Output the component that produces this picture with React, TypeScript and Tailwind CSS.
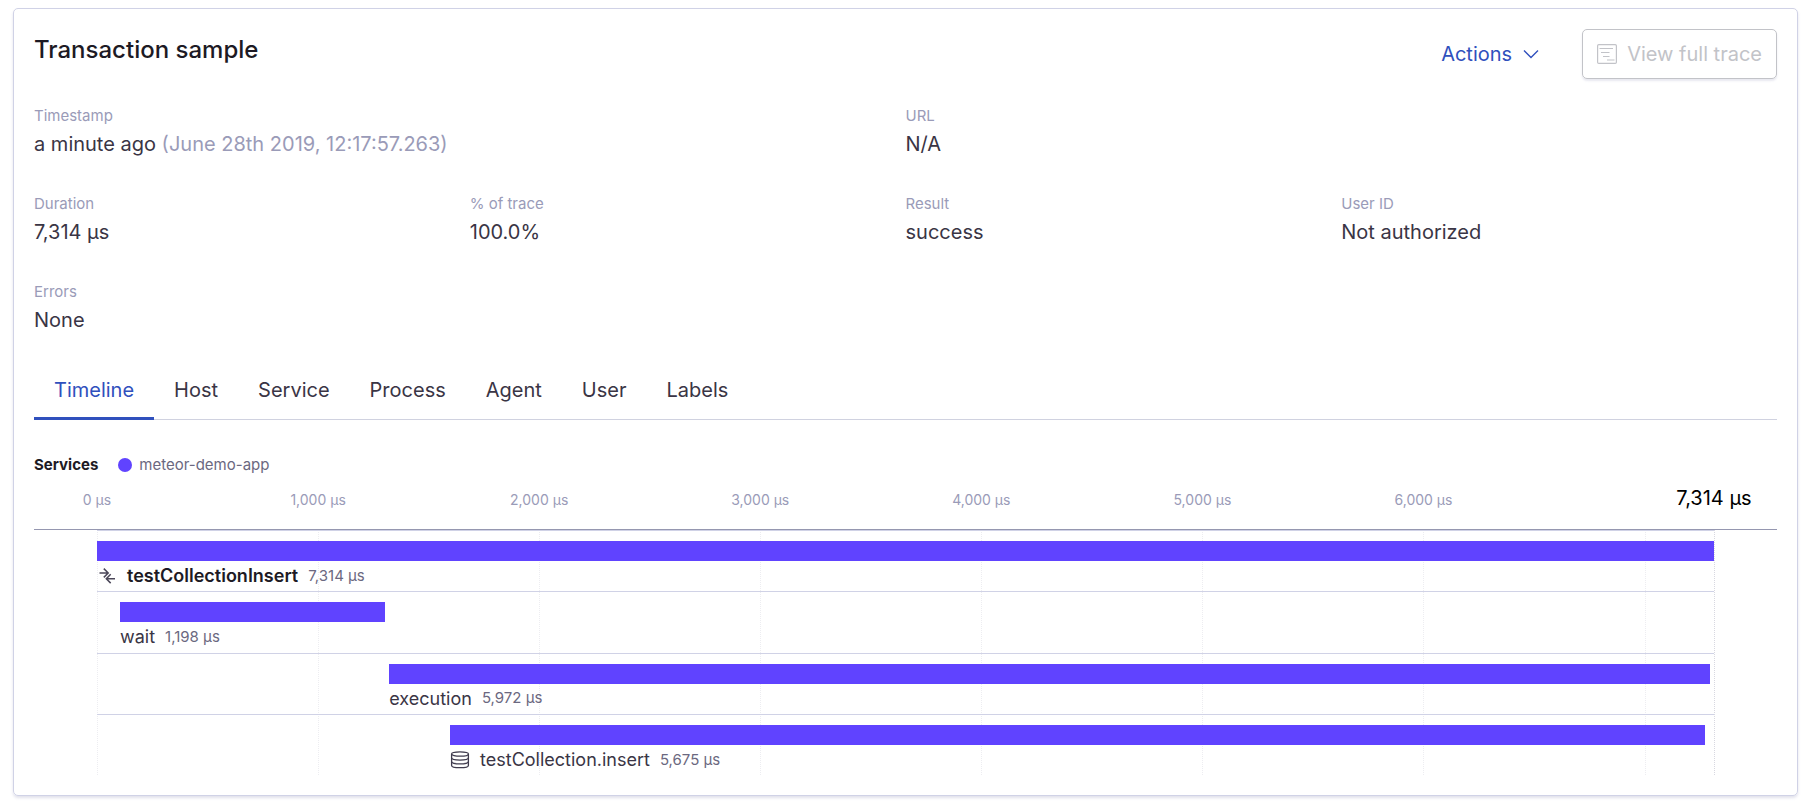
import React from "react";

const TOTAL = 7314;

const ticks = [0, 1000, 2000, 3000, 4000, 5000, 6000];
const gridLines = [0, 1000, 2000, 3000, 4000, 5000, 6000, 7000];

const format = (n: number) => n.toLocaleString("en-US") + " µs";
const percent = (n: number) => (n / TOTAL) * 100 + "%";

type Span = {
  name: string;
  start: number;
  duration: number;
  icon?: React.ReactNode;
  root?: boolean;
};

function MergeIcon() {
  return (
    <svg width="20" height="20" viewBox="0 0 20 20" fill="none" stroke="#4a4658" strokeWidth="1.5" aria-hidden="true">
      <path d="M2.500 7h8.500M6.800 2.600L11.200 7l-4.400 4.400M18 12.700H9.500M13.700 8.300l-4.400 4.400 4.400 4.400" />
    </svg>
  );
}

function DatabaseIcon() {
  return (
    <svg width="20" height="20" viewBox="0 0 20 20" fill="none" stroke="#3f3b4d" strokeWidth="1.300" aria-hidden="true">
      <ellipse cx="10" cy="4" rx="8.400" ry="2.200" />
      <path d="M1.600 4v11.400c0 1.300 3.700 2.300 8.400 2.300s8.400-1 8.400-2.300V4" />
      <path d="M1.600 7.800c0 1.300 3.700 2.300 8.400 2.300s8.400-1 8.400-2.300M1.600 11.600c0 1.300 3.700 2.300 8.400 2.300s8.400-1 8.400-2.300" />
    </svg>
  );
}

function TraceIcon() {
  return (
    <svg width="20" height="20" viewBox="0 0 20 20" fill="none" stroke="currentColor" strokeWidth="1.200" aria-hidden="true">
      <rect x="0.600" y="0.600" width="18.800" height="18.800" rx="1.200" />
      <path d="M2.500 4.500h13.500M4 8.500h8.500M6 12.500h6.500M10 16h7.500" />
    </svg>
  );
}

const spans: Span[] = [
  { name: "testCollectionInsert", start: 0, duration: 7314, icon: <MergeIcon />, root: true },
  { name: "wait", start: 104, duration: 1198 },
  { name: "execution", start: 1322, duration: 5972 },
  { name: "testCollection.insert", start: 1597, duration: 5675, icon: <DatabaseIcon /> },
];

const tabs = ["Timeline", "Host", "Service", "Process", "Agent", "User", "Labels"];

function Field({ label, wide, children }: { label: string; wide?: boolean; children: React.ReactNode }) {
  return (
    <div className={wide ? "col-span-2" : ""}>
      <dt className="text-[15px] leading-6 text-[#9a9bb8]">{label}</dt>
      <dd className="text-xl leading-8 text-[#3a3545]">{children}</dd>
    </div>
  );
}

export default function App() {
  return (
    <main className="bg-white py-2 pr-4 pl-[13px] font-[Inter,sans-serif]">
      <section className="rounded-[5px] border border-[#d0d2e6] p-5 shadow-[0_2px_3px_rgba(110,110,160,0.2)]">
        <header className="flex items-start justify-between">
          <h1 className="text-2xl leading-[42px] font-medium text-[#1d1a24]">Transaction sample</h1>
          <div className="flex items-center gap-[42px]">
            <button className="flex items-center gap-2.5 text-xl text-[#3050bd]">
              Actions
              <svg width="18" height="18" viewBox="0 0 18 18" fill="none" stroke="currentColor" strokeWidth="1.400" aria-hidden="true">
                <path d="M2 5.500l7 7 7-7" />
              </svg>
            </button>
            <button
              disabled
              className="flex h-[50px] items-center gap-2.5 rounded-[5px] border border-[#c2c3c8] px-3.5 text-xl text-[#c2c3c8] shadow-[0_2px_2px_rgba(110,110,160,0.15)]"
            >
              <TraceIcon />
              View full trace
            </button>
          </div>
        </header>

        <dl className="mt-[25px] grid grid-cols-4 gap-y-8">
          <Field label="Timestamp" wide>
            a minute ago <span className="text-[#9a9bb8]">(June 28th 2019, 12:17:57.263)</span>
          </Field>
          <Field label="URL" wide>N/A</Field>
          <Field label="Duration">7,314 µs</Field>
          <Field label="% of trace">100.0%</Field>
          <Field label="Result">success</Field>
          <Field label="User ID">Not authorized</Field>
          <Field label="Errors">None</Field>
        </dl>

        <div role="tablist" className="mt-6 flex border-b border-[#d0d2e0]">
          {tabs.map((tab, i) => (
            <button
              key={tab}
              role="tab"
              aria-selected={i === 0}
              className={
                i === 0
                  ? "-mb-px border-b-3 border-[#3050bd] px-5 pt-3.5 pb-[11px] text-xl leading-8 text-[#3050bd]"
                  : "-mb-px border-b-3 border-transparent px-5 pt-3.5 pb-[11px] text-xl leading-8 text-[#3a3545]"
              }
            >
              {tab}
            </button>
          ))}
        </div>

        <div className="mt-[33px] flex items-center gap-5 text-[15px] leading-6">
          <h2 className="font-bold text-[#1d1a24]">Services</h2>
          <div className="flex items-center gap-[7px] text-[#6b6880]">
            <span className="size-3.5 rounded-full bg-[#6043ff]" />
            meteor-demo-app
          </div>
        </div>

        <div className="border-b border-[#9597b0] px-[63px]">
          <div className="relative h-[52px] text-sm leading-5 text-[#9a9bb8]">
            {ticks.map((t) => (
              <span key={t} className="absolute top-[13px] -translate-x-1/2 whitespace-nowrap" style={{ left: percent(t) }}>
                {format(t)}
              </span>
            ))}
            <span className="absolute top-[9px] left-full -translate-x-1/2 text-xl leading-6 whitespace-nowrap text-black">
              {format(TOTAL)}
            </span>
          </div>
        </div>

        <div className="px-[63px]">
          <div className="relative flex h-[245px] flex-col">
            {gridLines.map((t) => (
              <div
                key={t}
                className="absolute inset-y-0 w-px border-l border-dotted border-[#ededf1]"
                style={{ left: percent(t) }}
              />
            ))}
            <div className="absolute inset-y-0 left-full w-px border-l border-dotted border-[#d8d8e0]" />
            {spans.map((s) => (
              <div key={s.name} className="relative flex-1 border-t border-[#d0d2e6] pt-2.5">
                <div style={{ marginLeft: percent(s.start) }}>
                  <div
                    className="h-5 bg-[#6043ff]"
                    style={{ width: (s.duration / (TOTAL - s.start)) * 100 + "%" }}
                  />
                  <div className="flex h-[30px] items-center gap-2.5 whitespace-nowrap">
                    {s.icon}
                    <span className={s.root ? "text-lg font-semibold text-[#1d1a24]" : "text-lg text-[#3a3545]"}>
                      {s.name}
                    </span>
                    <span className="text-[15px] text-[#6b6880]">{format(s.duration)}</span>
                  </div>
                </div>
              </div>
            ))}
          </div>
        </div>
      </section>
    </main>
  );
}
